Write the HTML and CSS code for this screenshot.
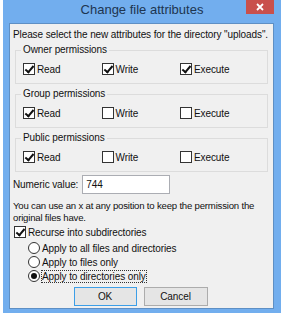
FILE: index.html
```html
<!DOCTYPE html>
<html lang="en">

<head>
    <meta charset="UTF-8">
    <meta name="viewport" content="width=device-width, initial-scale=1.0">
    <title>Change file attributes</title>
    <link rel="stylesheet" href="styles.css">
</head>

<body>
    <div class="window">
        <div class="titlebar">
            <span class="title">Change file attributes</span>
            <span class="close">
                <svg width="8" height="8" viewBox="0 0 8 8"><path d="M1 1L7 7M7 1L1 7" stroke="#fff" stroke-width="1.8"/></svg>
            </span>
        </div>
        <div class="panel">
            <p class="intro">Please select the new attributes for the directory "uploads".</p>

            <div class="group">
                <span class="legend">Owner permissions</span>
                <div class="row">
                    <span class="opt"><i class="box on"></i>Read</span>
                    <span class="opt"><i class="box on"></i>Write</span>
                    <span class="opt"><i class="box on"></i>Execute</span>
                </div>
            </div>

            <div class="group">
                <span class="legend">Group permissions</span>
                <div class="row">
                    <span class="opt"><i class="box on"></i>Read</span>
                    <span class="opt"><i class="box"></i>Write</span>
                    <span class="opt"><i class="box"></i>Execute</span>
                </div>
            </div>

            <div class="group">
                <span class="legend">Public permissions</span>
                <div class="row">
                    <span class="opt"><i class="box on"></i>Read</span>
                    <span class="opt"><i class="box"></i>Write</span>
                    <span class="opt"><i class="box"></i>Execute</span>
                </div>
            </div>

            <div class="numeric">
                <span>Numeric value:</span>
                <span class="field">744</span>
            </div>

            <p class="hint">You can use an x at any position to keep the permission the<br>original files have.</p>

            <div class="recurse"><i class="box on"></i>Recurse into subdirectories</div>

            <ul class="radios">
                <li><i class="radio"></i>Apply to all files and directories</li>
                <li><i class="radio"></i>Apply to files only</li>
                <li><i class="radio on"></i><span class="focus">Apply to directories only</span></li>
            </ul>

            <div class="buttons">
                <span class="btn default">OK</span>
                <span class="btn">Cancel</span>
            </div>
        </div>
    </div>
</body>

</html>
```

FILE: styles.css
```css
* {
    margin: 0;
    padding: 0;
    box-sizing: border-box;
}

body {
    background-color: #fff;
    font-family: "Liberation Sans", Arial, sans-serif;
    font-size: 10px;
    letter-spacing: -0.1px;
    color: #111;
}

.window {
    width: 278px;
    height: 313px;
    margin-left: 3px;
    background-color: #72aeee;
    display: flex;
    flex-direction: column;
}

.titlebar {
    height: 23px;
    display: flex;
    justify-content: center;
    position: relative;
}

.title {
    font-size: 13px;
    letter-spacing: 0;
    color: #1d3550;
    line-height: 20px;
}

.close {
    position: absolute;
    top: 0;
    right: 7px;
    width: 28px;
    height: 14px;
    background-color: #c9504c;
    display: flex;
    align-items: center;
    justify-content: center;
}

.panel {
    flex: 1;
    margin: 0 7px 4px 6px;
    background-color: #f0f0f0;
    border: 1px solid #5e8fc4;
    padding: 4px 5px 0 3px;
}

.intro {
    line-height: 14px;
    white-space: nowrap;
}

.group {
    border: 1px solid #dcdcdc;
    margin: 8px 0 0 2px;
    padding: 10px 0 6px 7px;
    position: relative;
}

.group + .group {
    margin-top: 10px;
}

.legend {
    position: absolute;
    top: -8px;
    left: 5px;
    padding: 0 2px;
    background-color: #f0f0f0;
    line-height: 14px;
}

.row {
    display: flex;
    height: 16px;
    align-items: center;
}

.opt {
    display: flex;
    align-items: center;
    width: 78.5px;
}

.box {
    display: inline-block;
    flex-shrink: 0;
    width: 12px;
    height: 12px;
    border: 1px solid #333;
    background-color: #fff;
    margin-right: 2px;
    position: relative;
}

.box.on::after {
    content: "";
    position: absolute;
    left: 3px;
    top: 0;
    width: 3px;
    height: 7px;
    border: solid #111;
    border-width: 0 2px 2px 0;
    transform: rotate(40deg);
}

.numeric {
    display: flex;
    align-items: center;
    margin-top: 3px;
    height: 19px;
}

.field {
    margin-left: 4px;
    width: 88px;
    height: 19px;
    border: 1px solid #abadb3;
    background-color: #fff;
    padding-left: 3px;
    line-height: 17px;
}

.hint {
    margin-top: 6px;
    line-height: 12px;
    font-size: 9.6px;
    letter-spacing: -0.2px;
    white-space: nowrap;
}

.recurse {
    display: flex;
    align-items: center;
    margin-top: 1px;
    margin-left: 1px;
    height: 14px;
}

.radios {
    list-style: none;
    margin-top: 2px;
    margin-left: 15px;
}

.radios li {
    display: flex;
    align-items: center;
    height: 14px;
}

.radio {
    display: inline-block;
    flex-shrink: 0;
    width: 12px;
    height: 12px;
    border: 1px solid #333;
    border-radius: 50%;
    background-color: #fff;
    margin-right: 2px;
    position: relative;
}

.radio.on::after {
    content: "";
    position: absolute;
    left: 2px;
    top: 2px;
    width: 6px;
    height: 6px;
    border-radius: 50%;
    background-color: #111;
}

.focus {
    outline: 1px dotted #333;
}

.buttons {
    display: flex;
    justify-content: center;
    gap: 7px;
    margin-top: 4px;
}

.btn {
    width: 64px;
    height: 19px;
    border: 1px solid #acacac;
    background-color: #e5e5e5;
    text-align: center;
    line-height: 17px;
}

.btn.default {
    width: 63px;
    border-color: #3c9ee7;
}
```
